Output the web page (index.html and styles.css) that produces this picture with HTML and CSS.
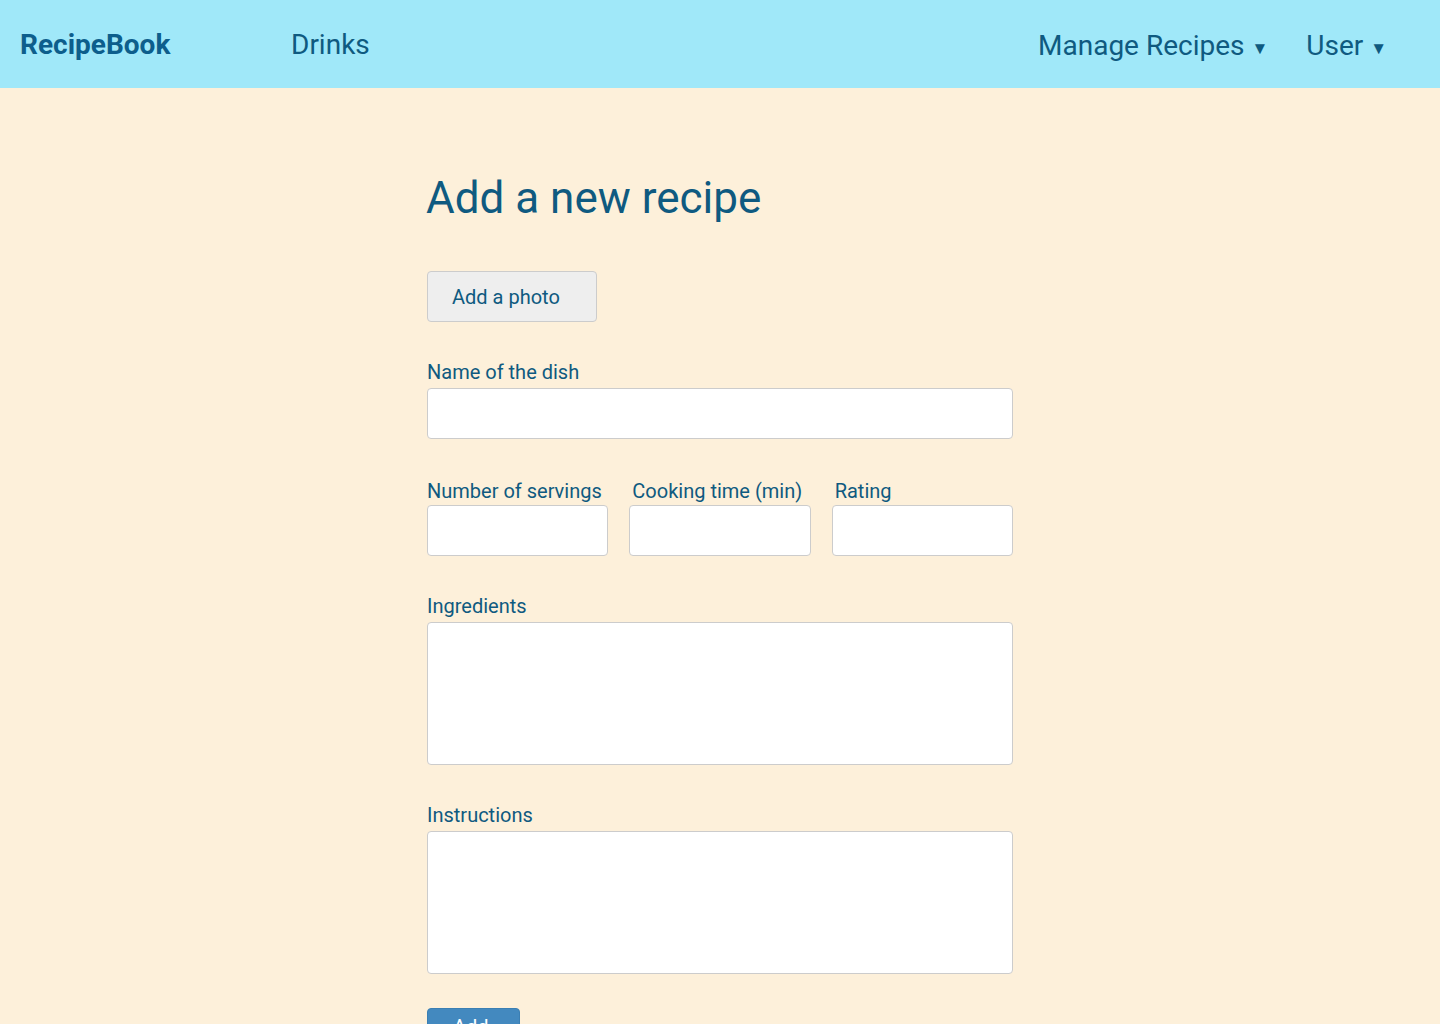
FILE: index.html
```
<!DOCTYPE html>
<html lang="en">
<head>
<meta charset="utf-8">
<title>RecipeBook</title>
<link rel="stylesheet" href="styles.css">
</head>
<body>
<header class="topbar">
  <a class="brand" href="#">RecipeBook</a>
  <nav class="nav-left"><a class="nav-link" href="#">Drinks</a></nav>
  <nav class="nav-right">
    <a class="nav-link dropdown" href="#">Manage Recipes <span class="caret">▼</span></a>
    <a class="nav-link dropdown" href="#">User <span class="caret">▼</span></a>
  </nav>
</header>
<main class="content">
  <form class="recipe-form">
    <h1 class="title">Add a new recipe</h1>
    <button type="button" class="btn-photo">Add a photo</button>
    <div class="field">
      <label class="label">Name of the dish</label>
      <input class="input" type="text">
    </div>
    <div class="field-row">
      <div class="field-col">
        <label class="label">Number of servings</label>
        <input class="input" type="text">
      </div>
      <div class="field-col">
        <label class="label shift">Cooking time (min)</label>
        <input class="input" type="text">
      </div>
      <div class="field-col">
        <label class="label shift">Rating</label>
        <input class="input" type="text">
      </div>
    </div>
    <div class="field">
      <label class="label">Ingredients</label>
      <textarea class="textarea"></textarea>
    </div>
    <div class="field">
      <label class="label">Instructions</label>
      <textarea class="textarea"></textarea>
    </div>
    <button type="submit" class="btn-add">Add</button>
  </form>
</main>
</body>
</html>
```
FILE: styles.css
```
* { box-sizing: border-box; }
html, body { margin: 0; padding: 0; }
body {
  background: #fdf0da;
  font-family: Roboto, "Noto Sans", "Liberation Sans", sans-serif;
  color: #0f5a80;
  min-height: 1024px;
}
.topbar {
  height: 88px;
  background: #a0e8f9;
  display: flex;
  align-items: center;
  padding: 0 20px;
}
.brand {
  font-size: 28px;
  font-weight: 700;
  color: #0d5e8c;
  text-decoration: none;
  width: 271px;
}
.nav-link {
  font-size: 28px;
  color: #0f5a80;
  text-decoration: none;
}
.nav-left { flex: 1; }
.nav-right { display: flex; gap: 38px; padding-right: 33px; padding-top: 2px; }
.caret { font-size: 17px; vertical-align: 1px; margin-left: 0; }
.content {
  display: flex;
  justify-content: center;
}
.recipe-form {
  width: 586px;
  padding-top: 68px;
  display: flex;
  flex-direction: column;
}
.title {
  font-size: 44px;
  font-weight: 400;
  margin: 0 0 0 -1px;
  line-height: 1;
  color: #0f5a80;
  padding-top: 20px;
}
.btn-photo {
  margin-top: 51px;
  width: 170px;
  height: 51px;
  background: #eeeeee;
  border: 1px solid #cccccc;
  border-radius: 4px;
  text-align: left;
  padding: 0 0 0 24px;
  font-family: inherit;
  font-size: 20px;
  color: #0f5a80;
}
.field { margin-top: 38px; display: flex; flex-direction: column; }
.field-row { margin-top: 40px; display: flex; gap: 21px; }
.field-col { flex: 1 1 0; min-width: 0; display: flex; flex-direction: column; }
.field-row .label { margin-bottom: 2px; }
.label {
  font-size: 20px;
  line-height: 24px;
  margin-bottom: 4px;
}
.label.shift { padding-left: 3px; }
.input {
  width: 100%;
  min-width: 0;
  height: 51px;
  background: #fff;
  border: 1px solid #cccccc;
  border-radius: 4px;
  font-family: inherit;
  font-size: 20px;
}
.textarea {
  height: 143px;
  background: #fff;
  border: 1px solid #cccccc;
  border-radius: 4px;
  resize: none;
  font-family: inherit;
  font-size: 20px;
}
.btn-add {
  margin-top: 34px;
  align-self: flex-start;
  width: 93px;
  background: #4389bf;
  color: #fff;
  border: 1px solid #3b7fb3;
  border-radius: 4px;
  font-family: inherit;
  font-size: 20px;
  line-height: 24px;
  text-align: left;
  padding: 6px 0 20px 25px;
}
```
